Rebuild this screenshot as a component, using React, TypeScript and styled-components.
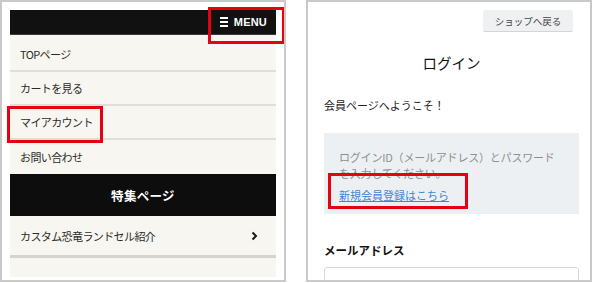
import React from "react"
import styled, { createGlobalStyle } from "styled-components"

const GlobalStyle = createGlobalStyle`
  body {
    margin: 0;
    background: #ffffff;
    font-family: "Noto Sans CJK JP", "Noto Sans", sans-serif;
  }
`

const Page = styled.div`
  display: flex;
  gap: 20px;
  width: 592px;
  height: 283px;
`

const Frame = styled.div`
  position: relative;
  box-sizing: border-box;
  width: 286px;
  height: 282px;
  border: 2px solid #c9c9c9;
  background: #ffffff;
  overflow: hidden;
`

const Highlight = styled.div<{ $x: number; $y: number; $w: number; $h: number }>`
  position: absolute;
  left: ${(p) => p.$x}px;
  top: ${(p) => p.$y}px;
  width: ${(p) => p.$w}px;
  height: ${(p) => p.$h}px;
  box-sizing: border-box;
  border: 3px solid #e60012;
  pointer-events: none;
`

/* left: smartphone menu */

const Phone = styled.div`
  margin: 8px 8px 0 8px;
  height: 267px;
  background: #f7f6f0;
  overflow: hidden;
`

const Header = styled.div`
  display: flex;
  justify-content: flex-end;
  align-items: center;
  height: 24px;
  padding-right: 9px;
  background: #111111;
  border-bottom: 1px solid #3a3a3a;
`

const MenuButton = styled.div`
  display: flex;
  align-items: center;
  gap: 6px;
  color: #ffffff;
  font-family: "Liberation Sans", "Noto Sans", sans-serif;
  font-weight: bold;
  font-size: 11px;
  letter-spacing: 0.2px;
`

const Burger = styled.span`
  display: flex;
  flex-direction: column;
  gap: 2px;
  width: 8px;

  & > i {
    display: block;
    height: 2px;
    background: #ffffff;
  }
`

const MenuList = styled.div`
  padding-top: 3px;
`

const MenuItem = styled.div<{ $last?: boolean }>`
  display: flex;
  align-items: center;
  justify-content: space-between;
  box-sizing: border-box;
  height: 34px;
  padding: 0 18px 0 10px;
  font-size: 11px;
  letter-spacing: -0.6px;
  color: #2b2b2b;
  border-bottom: ${(p) => (p.$last ? "none" : "2px solid #e0ded6")};
`

const FeatureBar = styled.div`
  display: flex;
  align-items: center;
  justify-content: center;
  height: 42px;
  background: #0d0d0d;
  color: #ffffff;
  font-size: 12.5px;
  font-weight: bold;
  letter-spacing: 0.3px;
`

const FeatureItem = styled(MenuItem)`
  height: 42px;
  border-bottom: 3px solid #d6d4cc;
`

const Chevron = () => (
  <svg width="7" height="10" viewBox="0 0 7 10">
    <polyline points="1.5,1.5 5,5 1.5,8.5" fill="none" stroke="#1a1a1a" strokeWidth="2" />
  </svg>
)

/* right: login page */

const Login = styled.div`
  display: flex;
  flex-direction: column;
  padding: 8px 11px 0 16px;
  color: #222222;
`

const BackButton = styled.div`
  align-self: flex-end;
  margin-right: 6px;
  width: 90px;
  height: 21px;
  display: flex;
  align-items: center;
  justify-content: center;
  background: #eef0f2;
  border-bottom: 1px solid #d3d6d9;
  border-radius: 2px;
  font-size: 9.5px;
  color: #444444;
`

const Title = styled.div`
  margin-top: 21px;
  text-align: center;
  font-size: 14.5px;
  line-height: 20px;
  color: #111111;
`

const Greeting = styled.div`
  margin-top: 24px;
  font-size: 11px;
  line-height: 16px;
`

const InfoBox = styled.div`
  margin-top: 20px;
  height: 81px;
  box-sizing: border-box;
  padding: 16px 15px 0 15px;
  background: #edf0f3;
`

const InfoText = styled.div`
  font-size: 11px;
  line-height: 16px;
  color: #8a8f95;
  letter-spacing: -0.2px;
`

const RegisterLink = styled.a`
  display: inline-block;
  margin-top: 4px;
  font-size: 11px;
  line-height: 16px;
  color: #3f86d6;
  text-decoration: underline;
`

const Label = styled.div`
  margin-top: 28px;
  font-size: 11.5px;
  font-weight: bold;
  line-height: 16px;
  color: #111111;
`

const Input = styled.div`
  margin-top: 9px;
  height: 36px;
  border: 1px solid #d5d9dd;
  border-radius: 3px;
  background: #ffffff;
`

const menuItems = ["TOPページ", "カートを見る", "マイアカウント", "お問い合わせ"]

export default function App() {
  return (
    <>
      <GlobalStyle />
      <Page>
        <Frame>
          <Phone>
            <Header>
              <MenuButton>
                <Burger>
                  <i />
                  <i />
                  <i />
                </Burger>
                MENU
              </MenuButton>
            </Header>
            <MenuList>
              {menuItems.map((label, i) => (
                <MenuItem key={label} $last={i === menuItems.length - 1}>
                  {label}
                </MenuItem>
              ))}
              <FeatureBar>特集ページ</FeatureBar>
              <FeatureItem>
                カスタム恐竜ランドセル紹介
                <Chevron />
              </FeatureItem>
              <FeatureItem />
            </MenuList>
          </Phone>
          <Highlight $x={206} $y={5} $w={77} $h={37} />
          <Highlight $x={5} $y={104} $w={96} $h={37} />
        </Frame>
        <Frame>
          <Login>
            <BackButton>ショップへ戻る</BackButton>
            <Title>ログイン</Title>
            <Greeting>会員ページへようこそ！</Greeting>
            <InfoBox>
              <InfoText>
                ログインID（メールアドレス）とパスワード
                <br />
                を入力してください。
              </InfoText>
              <RegisterLink href="#">新規会員登録はこちら</RegisterLink>
            </InfoBox>
            <Label>メールアドレス</Label>
            <Input />
          </Login>
          <Highlight $x={20} $y={171} $w={140} $h={36} />
        </Frame>
      </Page>
    </>
  )
}
